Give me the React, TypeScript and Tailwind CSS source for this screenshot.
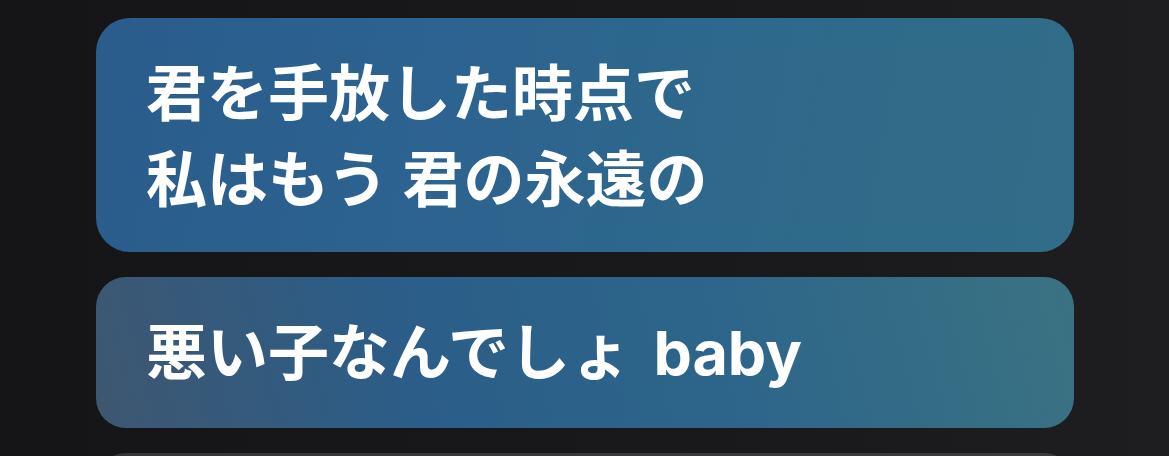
const lines = [
  { id: 1, text: ["君を手放した時点で", "私はもう 君の永遠の"] },
  { id: 2, text: ["悪い子なんでしょ baby"] },
];

export default function App() {
  return (
    <div
      className="h-[456px] w-full overflow-hidden bg-[linear-gradient(to_right,#151517,#1a1a1c_70%,#1e1e20)] pt-[18px]"
      style={{ fontFamily: '"Inter", "Noto Sans CJK JP", sans-serif' }}
    >
      <div className="ml-[96px] flex w-[978px] flex-col gap-[25px]">
        {lines.map((line, i) => (
          <div
            key={line.id}
            className={
              i === 0
                ? "rounded-[34px] bg-[linear-gradient(100deg,#2a5c8c_0%,#2c6390_35%,#2f6a8a_75%,#316d88_100%)] px-[50px] pb-[29px] pt-[33px]"
                : "rounded-[30px] bg-[linear-gradient(75deg,#3e5770_0%,#2b5d88_32%,#2d668a_65%,#3b7282_100%)] px-[50px] pb-[32px] pt-[33px] [word-spacing:8px]"
            }
          >
            {line.text.map((t) => (
              <p
                key={t}
                className="text-[61px] font-bold leading-[86px] text-white"
              >
                {t}
              </p>
            ))}
          </div>
        ))}
        <div className="h-[80px] rounded-[30px] bg-[linear-gradient(to_right,#363638,#3b3b3d)]" />
      </div>
    </div>
  );
}
